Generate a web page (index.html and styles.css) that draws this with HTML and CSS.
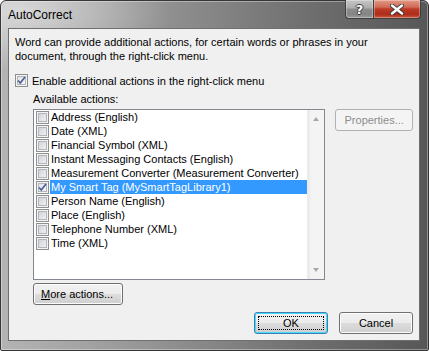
FILE: index.html
```html
<!DOCTYPE html>
<html lang="en">
<head>
    <meta charset="UTF-8">
    <meta name="viewport" content="width=device-width, initial-scale=1.0">
    <title>AutoCorrect</title>
    <link rel="stylesheet" href="styles.css">
</head>
<body>
    <div class="window">
        <div class="titlebar">
            <span class="title">AutoCorrect</span>
            <div class="caption-buttons">
                <button class="cap-btn help">?</button>
                <button class="cap-btn close">
                    <svg width="14" height="11" viewBox="0 0 14 11">
                        <path d="M2 1.5 L12 9.5 M12 1.5 L2 9.5" stroke="#3a3a3a" stroke-width="4.2" stroke-linecap="round"/>
                        <path d="M2 1.5 L12 9.5 M12 1.5 L2 9.5" stroke="#fff" stroke-width="2.4" stroke-linecap="round"/>
                    </svg>
                </button>
            </div>
        </div>
        <div class="client">
            <p class="intro">Word can provide additional actions, for certain words or phrases in your<br>document, through the right-click menu.</p>
            <label class="check-row">
                <span class="check checked"><svg width="11" height="11" viewBox="0 0 11 11"><path d="M2 5.5 L4.3 8 L9 2" fill="none" stroke="#4a5f97" stroke-width="1.7"/></svg></span>
                Enable additional actions in the right-click menu
            </label>
            <div class="actions">
                <div class="actions-label">Available actions:</div>
                <div class="actions-body">
                    <div class="listbox">
                        <ul class="items">
                            <li><span class="check"></span><span class="item-text">Address (English)</span></li>
                            <li><span class="check"></span><span class="item-text">Date (XML)</span></li>
                            <li><span class="check"></span><span class="item-text">Financial Symbol (XML)</span></li>
                            <li><span class="check"></span><span class="item-text">Instant Messaging Contacts (English)</span></li>
                            <li><span class="check"></span><span class="item-text">Measurement Converter (Measurement Converter)</span></li>
                            <li class="selected"><span class="check checked"><svg width="11" height="11" viewBox="0 0 11 11"><path d="M2 5.5 L4.3 8 L9 2" fill="none" stroke="#4a5f97" stroke-width="1.7"/></svg></span><span class="item-text">My Smart Tag (MySmartTagLibrary1)</span></li>
                            <li><span class="check"></span><span class="item-text">Person Name (English)</span></li>
                            <li><span class="check"></span><span class="item-text">Place (English)</span></li>
                            <li><span class="check"></span><span class="item-text">Telephone Number (XML)</span></li>
                            <li><span class="check"></span><span class="item-text">Time (XML)</span></li>
                        </ul>
                        <div class="scrollbar">
                            <span class="arrow up"></span>
                            <span class="arrow down"></span>
                        </div>
                    </div>
                    <button class="btn" disabled>Properties...</button>
                </div>
                <button class="btn more"><u>M</u>ore actions...</button>
            </div>
            <div class="dialog-buttons">
                <button class="btn default"><span class="focus">OK</span></button>
                <button class="btn">Cancel</button>
            </div>
        </div>
    </div>
</body>
</html>
```
FILE: styles.css
```css
body {
    margin: 0;
    font-family: "Liberation Sans", Arial, sans-serif;
    font-size: 11px;
    color: #000;
}
.window {
    width: 429px;
    height: 351px;
    box-sizing: border-box;
    padding: 0 8px 9px 7px;
    border: 1px solid #363636;
    border-radius: 6px 6px 2px 2px;
    background:
        radial-gradient(ellipse 150px 60px at 20px 10px, rgba(255,255,255,0.5), rgba(255,255,255,0)),
        linear-gradient(to right, #b4b4b4 0%, #9e9e9e 25%, #858585 50%, #6c6c6c 75%, #575757 100%);
    box-shadow: inset 0 0 0 1px rgba(255,255,255,0.35);
    display: flex;
    flex-direction: column;
}
.titlebar {
    height: 27px;
    display: flex;
    justify-content: space-between;
    align-items: flex-start;
    margin-right: -1px;
}
.title {
    font-size: 12px;
    margin: 7px 0 0 0;
    color: #000;
}
.caption-buttons {
    display: flex;
    margin-top: -1px;
}
.cap-btn {
    height: 19px;
    border: 1px solid #3f3f3f;
    border-top: none;
    padding: 0;
    display: flex;
    align-items: center;
    justify-content: center;
    box-shadow: inset 0 0 0 1px rgba(255,255,255,0.3);
}
.help {
    width: 28px;
    border-radius: 0 0 0 4px;
    border-right: none;
    background: linear-gradient(#c6c6c6 0%, #acacac 45%, #8c8c8c 50%, #858585 80%, #9c9c9c 100%);
    color: #fff;
    font-family: "DejaVu Sans", sans-serif;
    font-weight: bold;
    font-size: 13px;
    text-shadow: 1px 0 #3a3a3a, -1px 0 #3a3a3a, 0 1px #3a3a3a, 0 -1px #3a3a3a;
}
.close {
    width: 48px;
    border-radius: 0 0 4px 0;
    background: linear-gradient(#e39a88 0%, #cf6a55 40%, #bd3a26 50%, #ae2c1a 80%, #c85a42 100%);
}
.client {
    flex: 1;
    background: #f0f0f0;
    border: 1px solid #6f6f6f;
    padding: 6px 6px 0 6px;
    display: flex;
    flex-direction: column;
}
.intro {
    margin: 0;
    line-height: 14px;
}
.check-row {
    display: flex;
    align-items: center;
    gap: 4px;
    margin-top: 11px;
    height: 13px;
}
.check {
    width: 13px;
    height: 13px;
    box-sizing: border-box;
    border: 1px solid #8e8f8f;
    background: linear-gradient(135deg, #c6cad0 0%, #e0e3e6 50%, #f7f7f7 100%);
    box-shadow: inset 0 0 0 1px #f4f4f4, inset 0 0 0 2px #b2b6bb;
    flex-shrink: 0;
    display: flex;
    align-items: center;
    justify-content: center;
}
.check.checked {
    background: linear-gradient(135deg, #d8dbe0 0%, #eceef0 50%, #fafafa 100%);
}
.actions {
    margin-left: 18px;
    margin-top: 5px;
}
.actions-label {
    line-height: 14px;
}
.actions-body {
    display: flex;
    align-items: flex-start;
    gap: 10px;
    margin-top: 3px;
}
.listbox {
    width: 294px;
    height: 171px;
    box-sizing: border-box;
    border: 1px solid #828790;
    background: #fff;
    display: flex;
}
.items {
    list-style: none;
    margin: 0;
    padding: 0 0 0 2px;
    flex: 1;
}
.items li {
    height: 14px;
    display: flex;
    align-items: center;
}
.item-text {
    flex: 1;
    margin-left: 1px;
    padding-left: 1px;
    line-height: 14px;
    white-space: nowrap;
}
.selected .item-text {
    background: #3399ff;
    color: #fff;
}
.scrollbar {
    width: 16px;
    background: linear-gradient(to right, #e8e8e8, #f4f4f4 20%, #f4f4f4);
    border-left: 1px solid #ececec;
    display: flex;
    flex-direction: column;
    justify-content: space-between;
    align-items: center;
    padding: 7px 0;
}
.arrow {
    width: 0;
    height: 0;
    border-left: 3.5px solid transparent;
    border-right: 3.5px solid transparent;
}
.arrow.up {
    border-bottom: 4px solid #a8a8a8;
}
.arrow.down {
    border-top: 4px solid #a8a8a8;
}
.btn {
    font-family: "Liberation Sans", Arial, sans-serif;
    font-size: 11px;
    color: #000;
    height: 22px;
    padding: 0 6px;
    border: 1px solid #707070;
    border-radius: 3px;
    background: linear-gradient(#f2f2f2 0%, #ebebeb 50%, #dddddd 50%, #cfcfcf 100%);
    box-shadow: inset 0 0 0 1px #fcfcfc;
}
.btn[disabled] {
    width: 78px;
    color: #8d8d8d;
    border-color: #adb2b5;
    background: #f4f4f4;
    box-shadow: none;
}
.more {
    margin-top: 3px;
    width: 90px;
    text-align: left;
    padding-left: 7px;
}
.dialog-buttons {
    display: flex;
    justify-content: flex-end;
    gap: 11px;
    margin-top: 7px;
}
.dialog-buttons .btn {
    width: 74px;
}
.btn.default {
    border-color: #3c7fb1;
    box-shadow: inset 0 0 0 1px #48d8fb;
    padding: 3px;
}
.focus {
    display: flex;
    align-items: center;
    justify-content: center;
    height: 100%;
    box-sizing: border-box;
    border: 1px dotted #000;
}
```
